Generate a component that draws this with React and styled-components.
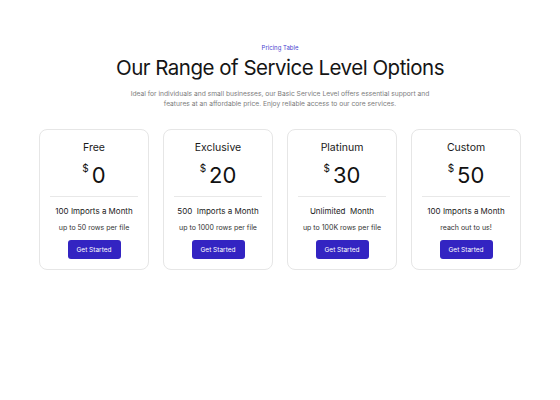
import React from 'react';
import styled, { createGlobalStyle } from 'styled-components';

const GlobalStyle = createGlobalStyle`
  body {
    margin: 0;
    background: #ffffff;
    font-family: Inter, "Open Sans", sans-serif;
    color: #111111;
  }
`;

const Page = styled.div`
  width: 560px;
  height: 400px;
  display: flex;
  flex-direction: column;
  align-items: center;
  padding-top: 43px;
  box-sizing: border-box;
`;

const Eyebrow = styled.div`
  font-size: 6px;
  color: #4a3fd0;
  line-height: 9px;
`;

const Heading = styled.h1`
  margin: 3px 0 0;
  font-size: 20.5px;
  font-weight: 400;
  letter-spacing: -0.5px;
  line-height: 26px;
  color: #151515;
`;

const Intro = styled.p`
  margin: 8px 0 0;
  width: 316px;
  text-align: center;
  font-size: 6.7px;
  line-height: 10px;
  color: #7c7c7c;
`;

const Cards = styled.div`
  margin-top: 20px;
  display: grid;
  grid-template-columns: repeat(4, 110px);
  gap: 14px;
`;

const Card = styled.div`
  height: 141px;
  box-sizing: border-box;
  border: 1px solid #e6e6e6;
  border-radius: 8px;
  display: flex;
  flex-direction: column;
  align-items: center;
  padding: 11px 10px 0;
`;

const PlanName = styled.div`
  font-size: 10.5px;
  line-height: 14px;
  color: #1a1a1a;
`;

const Price = styled.div`
  margin-top: 7px;
  display: flex;
  align-items: flex-start;
  gap: 3px;
  height: 30px;
`;

const Currency = styled.span`
  font-size: 10px;
  line-height: 10px;
  margin-top: 1px;
`;

const Amount = styled.span`
  font-size: 22px;
  line-height: 26px;
  color: #111;
`;

const Divider = styled.div`
  align-self: stretch;
  height: 1px;
  background: #e8e8e8;
  margin-top: 4px;
`;

const Feature = styled.div`
  margin-top: 9px;
  font-size: 8px;
  line-height: 10px;
  color: #222;
  white-space: pre;
`;

const Note = styled.div`
  margin-top: 7px;
  font-size: 7px;
  line-height: 9px;
  color: #333;
`;

const Button = styled.button`
  margin-top: 8px;
  width: 53px;
  height: 19px;
  border: none;
  border-radius: 3px;
  background: #3324c2;
  color: #fff;
  font-family: inherit;
  font-size: 6.5px;
  padding: 0;
  cursor: pointer;
`;

const plans = [
  { name: 'Free', price: '0', feature: '100 Imports a Month', note: 'up to 50 rows per file' },
  { name: 'Exclusive', price: '20', feature: '500  Imports a Month', note: 'up to 1000 rows per file' },
  { name: 'Platinum', price: '30', feature: 'Unlimited  Month', note: 'up to 100K rows per file' },
  { name: 'Custom', price: '50', feature: '100 Imports a Month', note: 'reach out to us!' }
];

export default function App() {
  return (
    <>
      <GlobalStyle />
      <Page>
        <Eyebrow>Pricing Table</Eyebrow>
        <Heading>Our Range of Service Level Options</Heading>
        <Intro>
          Ideal for individuals and small businesses, our Basic Service Level offers essential support and
          features at an affordable price. Enjoy reliable access to our core services.
        </Intro>
        <Cards>
          {plans.map(p => (
            <Card key={p.name}>
              <PlanName>{p.name}</PlanName>
              <Price>
                <Currency>$</Currency>
                <Amount>{p.price}</Amount>
              </Price>
              <Divider />
              <Feature>{p.feature}</Feature>
              <Note>{p.note}</Note>
              <Button>Get Started</Button>
            </Card>
          ))}
        </Cards>
      </Page>
    </>
  );
}
